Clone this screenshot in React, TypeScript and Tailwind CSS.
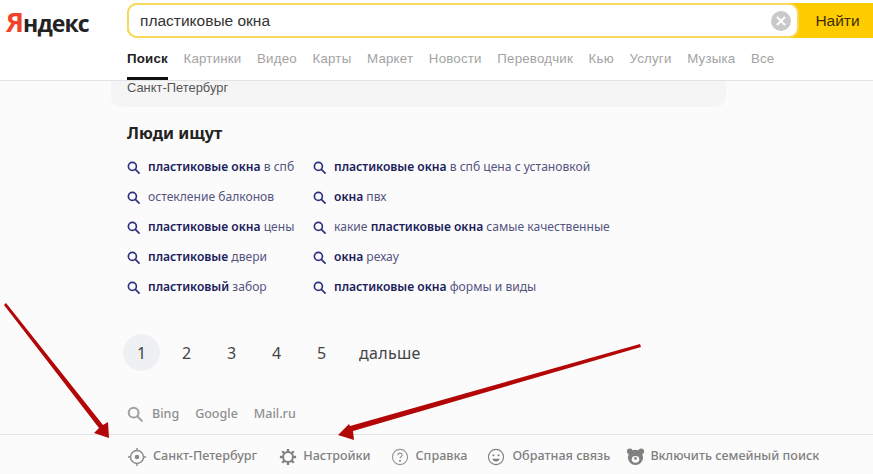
const TABS = ['Картинки', 'Видео', 'Карты', 'Маркет', 'Новости', 'Переводчик', 'Кью', 'Услуги', 'Музыка', 'Все'];

type Part = { t: string; b?: boolean };

const LEFT: Part[][] = [
  [{ t: 'пластиковые окна', b: true }, { t: ' в спб' }],
  [{ t: 'остекление балконов' }],
  [{ t: 'пластиковые окна', b: true }, { t: ' цены' }],
  [{ t: 'пластиковые', b: true }, { t: ' двери' }],
  [{ t: 'пластиковый', b: true }, { t: ' забор' }],
];

const RIGHT: Part[][] = [
  [{ t: 'пластиковые окна', b: true }, { t: ' в спб цена с установкой' }],
  [{ t: 'окна', b: true }, { t: ' пвх' }],
  [{ t: 'какие ' }, { t: 'пластиковые окна', b: true }, { t: ' самые качественные' }],
  [{ t: 'окна', b: true }, { t: ' рехау' }],
  [{ t: 'пластиковые окна', b: true }, { t: ' формы и виды' }],
];

function SearchIcon({ className }: { className: string }) {
  return (
    <svg viewBox="0 0 14 14" fill="none" stroke="currentColor" strokeWidth="1.8" className={className}>
      <circle cx="5.8" cy="5.8" r="4.3" />
      <path d="M9 9l4 4" strokeLinecap="round" />
    </svg>
  );
}

function Suggest({ parts }: { parts: Part[] }) {
  return (
    <div className="flex items-center h-[30px] whitespace-pre">
      <SearchIcon className="w-[13px] h-[13px] mr-[8px] text-[#2f2f80]" />
      <span className="text-[12.1px] text-[#55557f]">
        {parts.map((p, i) => (
          <span key={i} className={p.b ? 'font-semibold text-[#1d1d5c]' : ''}>{p.t}</span>
        ))}
      </span>
    </div>
  );
}

function Arrows() {
  return (
    <svg className="absolute inset-0 pointer-events-none" width="873" height="474" viewBox="0 0 873 474">
      <path d="M4 305L6 303L103 425L108 422L109 438L94 433L99 428Z" fill="#b30606" />
      <path d="M640 344L641 347L353 431L354 440L338 435L349 424L350 426Z" fill="#b30606" />
    </svg>
  );
}

export default function App() {
  return (
    <div className="relative w-[873px] h-[474px] overflow-hidden bg-[#fbfbfb] font-['Noto_Sans',sans-serif]">
      {/* header */}
      <header className="h-[81px] bg-white border-b border-[#e3e3e3] flex">
        <div className="w-[127px] shrink-0 pl-[6px] pt-[3px] text-[23px] leading-[38px] font-bold tracking-[-0.9px] text-[#222] font-['Open_Sans',sans-serif]">
          <span className="text-[#f0432a] text-[27px]">Я</span>ндекс
        </div>
        <div className="flex-1 flex flex-col">
          <div className="mt-[3px] h-[38px] flex bg-[#ffcc00] rounded-l-[10px]">
            <div className="flex-1 flex items-center justify-between bg-white border-2 border-[#f7d95c] rounded-[10px] pl-[11px] pr-[6px]">
              <span className="text-[15.5px] pt-[1px] text-[#333] font-['Liberation_Sans',sans-serif]">пластиковые окна</span>
              <span className="w-5 h-5 rounded-full bg-[#c9c9c9] flex items-center justify-center">
                <svg viewBox="0 0 10 10" className="w-[10px] h-[10px]" stroke="#fff" strokeWidth="2">
                  <path d="M1 1l8 8M9 1l-8 8" />
                </svg>
              </span>
            </div>
            <div className="w-[74px] flex items-center justify-center pt-[1px] pl-[3px] text-[15.5px] text-[#3a2f00] font-['Liberation_Sans',sans-serif]">Найти</div>
          </div>
          <nav className="flex mt-[7px] gap-[15.6px] text-[13.3px] text-[#a3a3a3] font-['Liberation_Sans',sans-serif] tracking-[0.2px]">
            <span className="h-[35px] pt-[4px] leading-[20px] font-bold text-[#222] border-b-[3px] border-[#111]">Поиск</span>
            {TABS.map((tab) => (
              <span key={tab} className="pt-[4px] leading-[20px]">{tab}</span>
            ))}
          </nav>
        </div>
      </header>

      {/* tail of the previous card */}
      <div className="ml-[111px] w-[615px] h-[26px] bg-[#f5f5f5] rounded-b-[10px] pl-4 text-[12.9px] leading-[14px] text-[#555] font-['Liberation_Sans',sans-serif]">
        Санкт-Петербург
      </div>

      {/* people search */}
      <section className="ml-[127px] mt-[15px]">
        <h2 className="text-[16.3px] leading-[22px] font-bold text-[#222]">Люди ищут</h2>
        <div className="flex mt-[8px]">
          <div className="w-[186px]">
            {LEFT.map((parts, i) => <Suggest key={i} parts={parts} />)}
          </div>
          <div>
            {RIGHT.map((parts, i) => <Suggest key={i} parts={parts} />)}
          </div>
        </div>
      </section>

      {/* pager */}
      <div className="ml-[123px] mt-[32px] flex items-center text-[16px] text-[#444]">
        <span className="w-[37px] h-[37px] rounded-full bg-[#eef0f3] flex items-center justify-center">1</span>
        <span className="w-[45px] text-center ml-[4px]">2</span>
        <span className="w-[45px] text-center">3</span>
        <span className="w-[45px] text-center">4</span>
        <span className="w-[45px] text-center">5</span>
        <span className="ml-[15px] tracking-[0.3px]">дальше</span>
      </div>

      {/* other engines */}
      <div className="ml-[127px] mt-[30px] h-[26px] flex items-center text-[12.5px] font-medium text-[#8f8f8f]">
        <SearchIcon className="w-[16px] h-[16px] mr-[9px] text-[#a0a0a0]" />
        <span className="mr-[16px]">Bing</span>
        <span className="mr-[16px]">Google</span>
        <span>Mail.ru</span>
      </div>

      {/* footer */}
      <footer className="mt-[7px] border-t border-[#e3e3e3] h-[44px] pl-[127px] flex items-center text-[12.6px] font-medium text-[#808080]">
        <svg viewBox="0 0 20 20" className="w-[20px] h-[20px] mr-[6px]" fill="none" stroke="#8a8a8a" strokeWidth="1.4">
          <circle cx="10" cy="10" r="6.5" />
          <circle cx="10" cy="10" r="1.6" fill="#8a8a8a" />
          <path d="M10 1v3M10 16v3M1 10h3M16 10h3" />
        </svg>
        <span className="mr-[22px]">Санкт-Петербург</span>
        <svg viewBox="0 0 20 20" className="w-[18px] h-[18px] mr-[6px]" fill="none" stroke="#808080">
          <circle cx="10" cy="10" r="5.5" strokeWidth="2.2" />
          <path d="M10 1v3.5M10 15.5V19M1 10h3.5M15.5 10H19M3.6 3.6l2.5 2.5M13.9 13.9l2.5 2.5M16.4 3.6l-2.5 2.5M6.1 13.9l-2.5 2.5" strokeWidth="2.6" />
        </svg>
        <span className="mr-[20px]">Настройки</span>
        <svg viewBox="0 0 20 20" className="w-[18px] h-[18px] mr-[7px]" fill="none" stroke="#969696" strokeWidth="1.3">
          <circle cx="10" cy="10" r="8.4" />
          <path d="M7.6 8c0-1.5 1-2.4 2.4-2.4s2.4.9 2.4 2.2c0 1.8-2.4 1.9-2.4 3.7" />
          <circle cx="10" cy="14.2" r=".6" fill="#969696" />
        </svg>
        <span className="mr-[20px]">Справка</span>
        <svg viewBox="0 0 20 20" className="w-[18px] h-[18px] mr-[7px]" fill="none" stroke="#808080" strokeWidth="1.3">
          <circle cx="10" cy="10" r="8.4" />
          <circle cx="7.2" cy="8" r="1.1" fill="#808080" stroke="none" />
          <circle cx="12.8" cy="8" r="1.1" fill="#808080" stroke="none" />
          <path d="M6 12h8c-.5 2-2 3-4 3s-3.5-1-4-3z" fill="#808080" stroke="none" />
        </svg>
        <span className="mr-[16px]">Обратная связь</span>
        <svg viewBox="0 0 20 20" className="w-[19px] h-[19px] mr-[5px]" fill="#808080">
          <circle cx="4" cy="4.5" r="3" />
          <circle cx="16" cy="4.5" r="3" />
          <circle cx="10" cy="11" r="8" />
          <ellipse cx="10" cy="13" rx="4" ry="3.6" fill="#fbfbfb" />
          <circle cx="10" cy="12" r="1.4" />
        </svg>
        <span>Включить семейный поиск</span>
      </footer>

      <Arrows />
    </div>
  );
}
